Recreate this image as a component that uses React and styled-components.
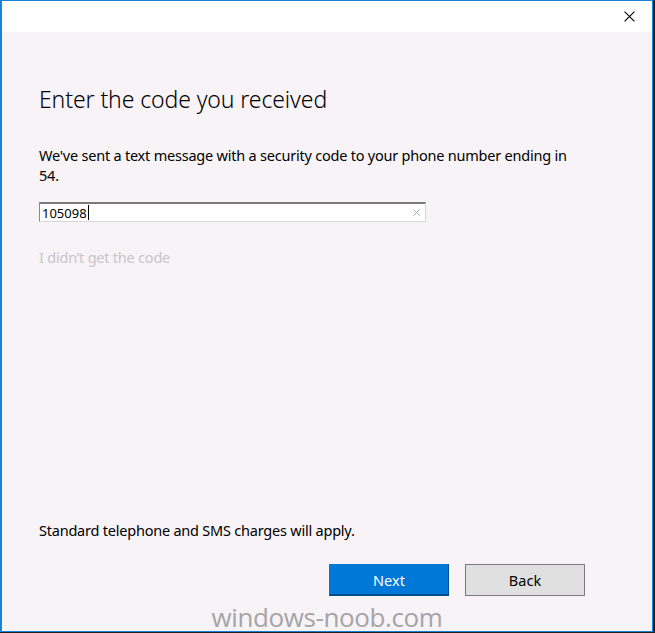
import React from "react";
import styled, { createGlobalStyle } from "styled-components";

const Global = createGlobalStyle`
  html, body { margin: 0; padding: 0; background: #1e1e1e; }
  body { font-family: "Noto Sans", "Open Sans", sans-serif; }
  * { box-sizing: border-box; }
`;

const Window = styled.div`
  position: relative;
  width: 653px;
  height: 632px;
  border: 1px solid #1883d7;
  border-left-width: 2px;
  background: #f7f3f7;
  display: flex;
  flex-direction: column;
`;

const TitleBar = styled.div`
  height: 31px;
  background: #ffffff;
  display: flex;
  justify-content: flex-end;
  align-items: flex-start;
  padding: 10px 16px 0 0;
`;

const CloseButton = styled.button`
  width: 12px;
  height: 12px;
  padding: 0;
  border: none;
  background: transparent;
  display: flex;
`;

const Content = styled.div`
  flex: 1;
  display: flex;
  flex-direction: column;
  padding: 0 0 0 37px;
`;

const Heading = styled.h1`
  margin: 51px 0 0;
  font-family: "Noto Sans", sans-serif;
  font-weight: 300;
  font-size: 23px;
  line-height: 32px;
  color: #000000;
  letter-spacing: -0.1px;
`;

const Text = styled.p`
  margin: ${(p) => p.$top || 0}px 0 0;
  width: 540px;
  font-size: 14.5px;
  line-height: 20px;
  color: #000000;
  letter-spacing: -0.22px;
`;

const Field = styled.div`
  margin-top: 17px;
  width: 387px;
  height: 20px;
  background: #ffffff;
  border: 1px solid #d9d9d9;
  border-top: 2px solid #7a7a7a;
  border-left: 1px solid #8a8a8a;
  display: flex;
  align-items: center;
  padding: 0 0 0 2px;
`;

const Value = styled.span`
  flex: 1;
  font-family: "Noto Sans", sans-serif;
  font-size: 13px;
  line-height: 16px;
  color: #000000;
  display: flex;
  align-items: center;
`;

const Caret = styled.span`
  display: inline-block;
  width: 1px;
  height: 15px;
  background: #000000;
  margin-left: 1px;
`;

const Clear = styled.span`
  width: 14px;
  display: flex;
  justify-content: center;
  margin-right: 2px;
`;

const Link = styled.span`
  margin-top: 25px;
  font-size: 14.5px;
  line-height: 20px;
  color: #c9c5c9;
  letter-spacing: -0.22px;
`;

const Spacer = styled.div`
  flex: 1;
`;

const Buttons = styled.div`
  display: flex;
  gap: 16px;
  margin: 24px 0 35px 290px;
`;

const Button = styled.button`
  width: 120px;
  height: 32px;
  font-family: "Noto Sans", sans-serif;
  font-size: 14.5px;
  padding: 0;
  border: 1px solid ${(p) => (p.$primary ? "#0078d7" : "#7a7a7a")};
  border-right-color: ${(p) => (p.$primary ? "#004f8f" : "#7a7a7a")};
  border-bottom: ${(p) => (p.$primary ? "2px solid #004f8f" : "1px solid #7a7a7a")};
  background: ${(p) => (p.$primary ? "#0078d7" : "#e0e0e0")};
  color: ${(p) => (p.$primary ? "#ffffff" : "#000000")};
`;

const Watermark = styled.div`
  position: absolute;
  left: 0;
  right: 0;
  bottom: 0;
  text-align: center;
  font-family: "Open Sans", sans-serif;
  font-size: 26px;
  line-height: 28px;
  color: #a6a4a6;
  letter-spacing: -0.4px;
  pointer-events: none;
`;

const XIcon = ({ size, color, weight }) => (
  <svg width={size} height={size} viewBox="0 0 10 10">
    <path d="M0.5 0.5 L9.5 9.5 M9.5 0.5 L0.5 9.5" stroke={color} strokeWidth={weight} fill="none" />
  </svg>
);

export default function App() {
  return (
    <>
      <Global />
      <Window>
        <TitleBar>
          <CloseButton>
            <XIcon size={11} color="#000" weight={1} />
          </CloseButton>
        </TitleBar>
        <Content>
          <Heading>Enter the code you received</Heading>
          <Text $top={30}>
            We've sent a text message with a security code to your phone number ending in 54.
          </Text>
          <Field>
            <Value>
              105098
              <Caret />
            </Value>
            <Clear>
              <XIcon size={7} color="#8fa3b8" weight={1.2} />
            </Clear>
          </Field>
          <Link>I didn’t get the code</Link>
          <Spacer />
          <Text>Standard telephone and SMS charges will apply.</Text>
          <Buttons>
            <Button $primary>Next</Button>
            <Button>Back</Button>
          </Buttons>
        </Content>
        <Watermark>windows-noob.com</Watermark>
      </Window>
    </>
  );
}
